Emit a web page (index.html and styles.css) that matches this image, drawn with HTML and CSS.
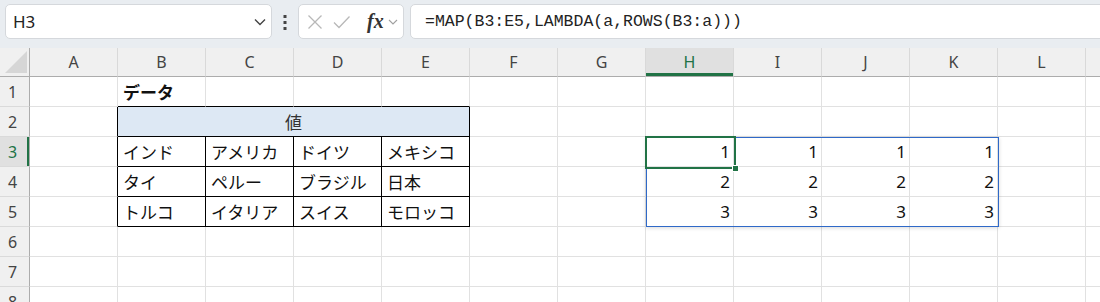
FILE: index.html
```html
<!DOCTYPE html>
<html lang="ja">
<head>
  <meta charset="UTF-8" />
  <title>MAP LAMBDA ROWS</title>
  <link rel="stylesheet" href="styles.css">
</head>
<body>

  <!-- Formula bar -->
  <div class="topbar">
    <div class="namebox">
      <span>H3</span>
      <svg class="chev" width="12" height="8" viewBox="0 0 12 8"><polyline points="1,1.5 6,6.5 11,1.5" /></svg>
    </div>
    <div class="grip">
      <svg width="4" height="16" viewBox="0 0 4 16"><rect x="0.5" y="1" width="3" height="3" /><rect x="0.5" y="7" width="3" height="3" /><rect x="0.5" y="13" width="3" height="3" /></svg>
    </div>
    <div class="fxbox">
      <svg class="ico" width="16" height="16" viewBox="0 0 16 16"><path d="M1.5 1.5 L14.5 14.5 M14.5 1.5 L1.5 14.5" /></svg>
      <svg class="ico" width="18" height="16" viewBox="0 0 18 16"><path d="M1 8.5 L6 13.5 L16.5 2.5" /></svg>
      <span class="fx">fx</span>
      <svg class="chev small" width="10" height="6" viewBox="0 0 10 6"><polyline points="1,1 5,5 9,1" /></svg>
    </div>
    <div class="formula">=MAP(B3:E5,LAMBDA(a,ROWS(B3:a)))</div>
  </div>

  <!-- Sheet -->
  <div class="sheet">
    <table class="grid">
      <colgroup>
        <col class="rh">
        <col><col><col><col><col><col><col><col><col><col><col><col><col>
      </colgroup>
      <tr class="head">
        <th class="corner"><span class="tri"></span></th>
        <th>A</th><th>B</th><th>C</th><th>D</th><th>E</th><th>F</th>
        <th>G</th><th class="sel">H</th><th>I</th><th>J</th><th>K</th><th>L</th><th></th>
      </tr>
      <tr>
        <th class="num">1</th>
        <td></td><td class="bb title">データ</td><td class="bb"></td><td class="bb"></td><td class="bb"></td>
        <td></td><td></td><td></td><td></td><td></td><td></td><td></td><td></td>
      </tr>
      <tr>
        <th class="num">2</th>
        <td class="br"></td><td colspan="4" class="bx cap">値</td>
        <td></td><td></td><td></td><td></td><td></td><td></td><td></td><td></td>
      </tr>
      <tr>
        <th class="num sel">3</th>
        <td class="br"></td><td class="bx">インド</td><td class="bx">アメリカ</td><td class="bx">ドイツ</td><td class="bx">メキシコ</td>
        <td></td><td></td><td class="n">1</td><td class="n">1</td><td class="n">1</td><td class="n">1</td><td></td><td></td>
      </tr>
      <tr>
        <th class="num">4</th>
        <td class="br"></td><td class="bx">タイ</td><td class="bx">ペルー</td><td class="bx">ブラジル</td><td class="bx">日本</td>
        <td></td><td></td><td class="n">2</td><td class="n">2</td><td class="n">2</td><td class="n">2</td><td></td><td></td>
      </tr>
      <tr>
        <th class="num">5</th>
        <td class="br"></td><td class="bx">トルコ</td><td class="bx">イタリア</td><td class="bx">スイス</td><td class="bx">モロッコ</td>
        <td></td><td></td><td class="n">3</td><td class="n">3</td><td class="n">3</td><td class="n">3</td><td></td><td></td>
      </tr>
      <tr>
        <th class="num">6</th>
        <td></td><td></td><td></td><td></td><td></td><td></td><td></td><td></td><td></td><td></td><td></td><td></td><td></td>
      </tr>
      <tr>
        <th class="num">7</th>
        <td></td><td></td><td></td><td></td><td></td><td></td><td></td><td></td><td></td><td></td><td></td><td></td><td></td>
      </tr>
      <tr>
        <th class="num">8</th>
        <td></td><td></td><td></td><td></td><td></td><td></td><td></td><td></td><td></td><td></td><td></td><td></td><td></td>
      </tr>
    </table>

    <!-- selection overlays -->
    <div class="range"></div>
    <div class="active"><span class="handle"></span></div>
  </div>

</body>
</html>
```

FILE: styles.css
```css
* {
  box-sizing: border-box;
}
body {
  margin: 0;
  background: #fff;
  overflow: hidden;
  font-family: "Noto Sans", "Noto Sans CJK JP", sans-serif;
  color: #222;
}

/* ----- formula bar ----- */
.topbar {
  height: 48px;
  background: #e9edf1;
  display: flex;
  align-items: flex-start;
  padding: 4px 0 0 5px;
  width: 1120px;
}
.namebox, .fxbox, .formula {
  height: 35px;
  background: #fff;
  border: 1px solid #d5d8dc;
  border-radius: 5px;
  display: flex;
  align-items: center;
}
.namebox {
  width: 267px;
  padding: 0 5px 0 7px;
  justify-content: space-between;
  font-size: 17px;
  color: #222;
}
.chev polyline {
  fill: none;
  stroke: #444;
  stroke-width: 1.4;
}
.chev.small polyline {
  stroke: #a0a0a0;
  stroke-width: 1.1;
}
.grip {
  width: 26px;
  height: 35px;
  display: flex;
  align-items: center;
  justify-content: center;
}
.grip rect {
  fill: #444;
}
.fxbox {
  width: 106px;
  padding: 0 4px 0 8px;
  gap: 10px;
}
.ico path {
  fill: none;
  stroke: #b8b8b8;
  stroke-width: 1.3;
}
.fx {
  font-family: "Liberation Serif", serif;
  font-style: italic;
  font-weight: bold;
  font-size: 20px;
  color: #333;
  margin-left: 6px;
  margin-right: -6px;
  line-height: 1;
  margin-top: -2px;
}
.formula {
  margin-left: 6px;
  flex: 1;
  padding-left: 14px;
  font-family: "Liberation Mono", monospace;
  font-size: 16.5px;
  color: #222;
}

/* ----- sheet grid ----- */
.sheet {
  position: relative;
  width: 1100px;
  overflow: hidden;
}
.grid {
  border-collapse: separate;
  border-spacing: 0;
  table-layout: fixed;
  width: 1174px;
}
.grid col {
  width: 88px;
}
.grid col.rh {
  width: 30px;
}
.grid td, .grid th {
  height: 30px;
  padding: 0 5px;
  border-right: 1px solid #e1e1e1;
  border-bottom: 1px solid #e1e1e1;
  font-size: 17px;
  font-weight: normal;
  white-space: nowrap;
  overflow: hidden;
}
.grid td {
  font-family: "Noto Sans CJK JP", "Noto Sans", sans-serif;
  color: #111;
}
.grid tr.head th {
  height: 29px;
  background: #f0f0f0;
  color: #444;
  font-size: 16px;
  text-align: center;
  border-right: 1px solid #d9d9d9;
  border-bottom: 1px solid #acacac;
}
.grid th.num {
  background: #f0f0f0;
  color: #444;
  font-size: 16px;
  text-align: left;
  padding-left: 8px;
  border-right: 1px solid #acacac;
  border-bottom: 1px solid #dadada;
}
.grid tr.head th.sel {
  background: #e0e0e0;
  color: #217346;
  box-shadow: inset 0 -3px 0 #217346;
}
.grid th.num.sel {
  background: #e0e0e0;
  color: #217346;
  box-shadow: inset -2px 0 0 #217346;
}
.grid tr.head th.corner {
  position: relative;
  border-right: 1px solid #acacac;
}
.tri {
  position: absolute;
  left: 5px;
  bottom: 3px;
  width: 0;
  height: 0;
  border-left: 22px solid transparent;
  border-bottom: 22px solid #d6d6d6;
}

/* black table borders */
.grid td.bb {
  border-bottom: 1px solid #000;
}
.grid td.br {
  border-right: 1px solid #000;
}
.grid td.bx {
  border-right: 1px solid #000;
  border-bottom: 1px solid #000;
}
.grid td.title {
  font-weight: bold;
}
.grid td.cap {
  background: #dde8f4;
  text-align: center;
  color: #333;
}
.grid td.n {
  text-align: right;
  padding-right: 3px;
  font-family: "Noto Sans", sans-serif;
}

/* ----- selection ----- */
.range {
  position: absolute;
  left: 646px;
  top: 89px;
  width: 353px;
  height: 90px;
  border: 1px solid #2f69c8;
  box-shadow: 0 1px 4px rgba(0, 0, 0, 0.15);
  pointer-events: none;
}
.active {
  position: absolute;
  left: 645px;
  top: 88px;
  width: 91px;
  height: 33px;
  border: 2px solid #217346;
  pointer-events: none;
}
.handle {
  position: absolute;
  right: -5px;
  bottom: -5px;
  width: 7px;
  height: 7px;
  background: #217346;
  border: 1px solid #fff;
}
```
